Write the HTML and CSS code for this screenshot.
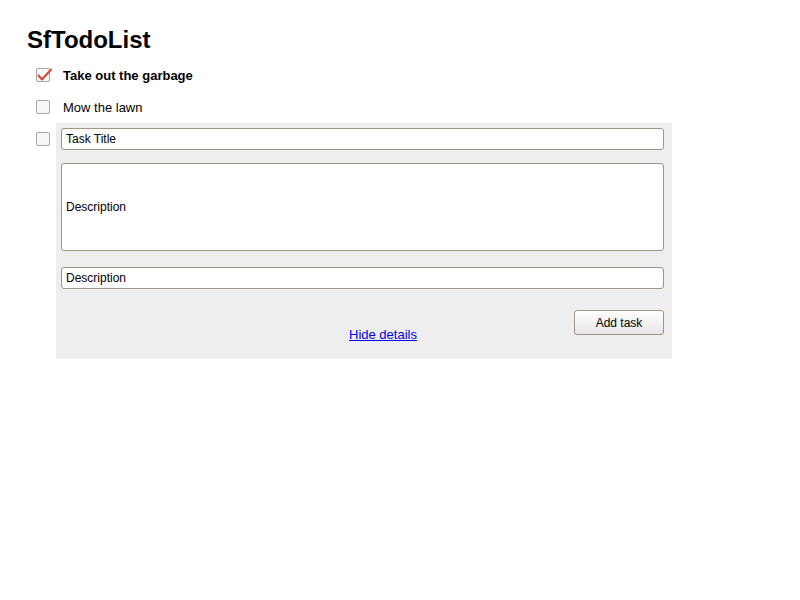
FILE: index.html
```html
<!DOCTYPE html>
<html>
<head>
<meta charset="utf-8">
<link rel="stylesheet" href="styles.css">
</head>
<body>
<h1 class="title">SfTodoList</h1>
<ul class="todo-list">
  <li class="todo-row">
    <span class="check check-on">
      <svg class="tick" width="18" height="16" viewBox="0 0 18 16"><polyline points="2.5,7.5 6,11.5 15,1.5" fill="none" stroke="#d9463b" stroke-width="2" stroke-linecap="round" stroke-linejoin="round"/></svg>
    </span>
    <span class="todo-text done">Take out the garbage</span>
  </li>
  <li class="todo-row">
    <span class="check"></span>
    <span class="todo-text">Mow the lawn</span>
  </li>
  <li class="todo-row new-row">
    <span class="check check-top"></span>
    <div class="panel">
      <input class="field" type="text" value="Task Title">
      <input class="field field-tall" type="text" value="Description">
      <input class="field field-last" type="text" value="Description">
      <div class="actions">
        <a class="details-link" href="#">Hide details</a>
        <button class="add-btn" type="button">Add task</button>
      </div>
    </div>
  </li>
</ul>
</body>
</html>
```
FILE: styles.css
```css
html, body {
  margin: 0;
  padding: 0;
  background: #ffffff;
}
body {
  font-family: "Liberation Sans", Arial, sans-serif;
  font-size: 13px;
  color: #000;
  padding-left: 26px;
}
.title {
  font-size: 24px;
  font-weight: bold;
  line-height: 28px;
  margin: 26px 0 5px 1px;
}
.todo-list {
  list-style: none;
  margin: 0;
  padding: 0 0 0 10px;
}
.todo-row {
  display: flex;
  align-items: center;
  height: 32px;
}
.new-row {
  align-items: flex-start;
  height: auto;
}
.check {
  position: relative;
  flex: none;
  width: 12px;
  height: 12px;
  border: 1px solid #a8a8a8;
  border-radius: 2px;
  background: #f7f7f7;
}
.check-top {
  margin-top: 9px;
}
.tick {
  position: absolute;
  left: -1px;
  top: -1px;
}
.todo-text {
  margin-left: 13px;
  line-height: 15px;
}
.done {
  font-weight: bold;
}
.panel {
  margin-left: 6px;
  width: 616px;
  box-sizing: border-box;
  background: #eeeeee;
  padding: 5px 8px 17px 5px;
}
.field {
  display: block;
  width: 100%;
  box-sizing: border-box;
  height: 22px;
  margin: 0;
  padding: 0 4px;
  border: 1px solid #a09586;
  border-radius: 3px;
  background: #fff;
  font-family: "Liberation Sans", Arial, sans-serif;
  font-size: 12px;
  color: #000;
  outline: none;
}
.field-tall {
  height: 88px;
  margin-top: 13px;
}
.field-last {
  margin-top: 16px;
}
.actions {
  display: flex;
  align-items: flex-start;
  margin-top: 21px;
}
.details-link {
  margin-left: 288px;
  margin-top: 17px;
  line-height: 15px;
  font-size: 13px;
  color: #0000ee;
  text-decoration: underline;
}
.add-btn {
  margin-left: auto;
  width: 90px;
  height: 25px;
  padding: 0;
  border: 1px solid #a09586;
  border-radius: 3px;
  background: linear-gradient(#ffffff, #e6e6e6);
  font-family: "Liberation Sans", Arial, sans-serif;
  font-size: 12px;
  color: #000;
}
```
